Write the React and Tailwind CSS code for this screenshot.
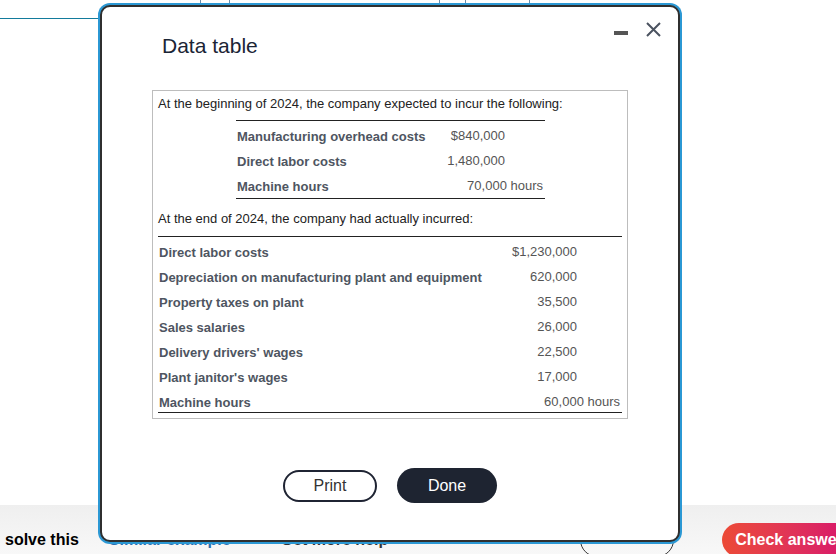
import React from 'react';

// Data table modal over a partially hidden question page

const planned = [
  { label: 'Manufacturing overhead costs', value: '$840,000' },
  { label: 'Direct labor costs', value: '1,480,000' },
  { label: 'Machine hours', value: '70,000 hours', unit: true },
];

const actual = [
  { label: 'Direct labor costs', value: '$1,230,000' },
  { label: 'Depreciation on manufacturing plant and equipment', value: '620,000' },
  { label: 'Property taxes on plant', value: '35,500' },
  { label: 'Sales salaries', value: '26,000' },
  { label: 'Delivery drivers\' wages', value: '22,500' },
  { label: 'Plant janitor\'s wages', value: '17,000' },
  { label: 'Machine hours', value: '60,000 hours', unit: true },
];

const Row = ({ row, numPad }) => (
  <div className="flex h-[25px] pt-[8px] leading-[16px] text-[13px]">
    <div className="flex-1 pl-[1px] font-bold text-[#4e5561] whitespace-nowrap">{row.label}</div>
    <div className={`text-right text-[#555] whitespace-nowrap -mt-[1px] ${row.unit ? 'pr-[2px]' : numPad}`}>
      {row.value}
    </div>
  </div>
);

const App = () => {
  return (
    <div
      className="relative w-full h-[554px] overflow-hidden bg-white flex flex-col"
      style={{ fontFamily: '"Liberation Sans", Arial, sans-serif' }}
    >
      {/* background page fragments */}
      <div className="flex h-[4px]">
        <div className="w-[200px]" />
        <div className="w-[29px] border-l border-[#6b8aa8]" />
        <div className="w-[210px] border-l border-[#6b8aa8]" />
        <div className="w-[26px] border-l border-[#6b8aa8]" />
        <div className="w-[64px] border-l border-[#6b8aa8]" />
        <div className="w-[10px] border-l border-[#6b8aa8]" />
      </div>
      <div className="mt-[14px] w-[110px] h-[1px] bg-[#137b9c]" />

      {/* bottom bar */}
      <div className="mt-auto h-[49px] bg-gradient-to-b from-[#efefef] to-[#f8f8f8] flex items-center pt-[20px] whitespace-nowrap">
        <span className="pl-[5px] text-[16px] font-bold text-black leading-[20px]">solve this</span>
        <span className="ml-[30px] text-[16px] font-bold text-[#2a6fb0] leading-[20px]">Similar example</span>
        <span className="ml-[50px] text-[16px] font-bold text-[#333] leading-[20px]">Get more help</span>
        <button className="ml-[192px] w-[94px] h-[34px] rounded-full border-[1.5px] border-[#333] text-[15px] text-[#2a6fb0] shrink-0">
          Clear all
        </button>
        <button className="ml-[48px] w-[140px] h-[34px] rounded-full bg-gradient-to-r from-[#ec4a35] to-[#d5006f] text-white text-[16px] font-bold text-left pl-[13px] shrink-0">
          Check answer
        </button>
      </div>

      {/* modal */}
      <div className="absolute left-[100px] top-[5px] w-[580px] h-[537px] bg-white border-2 border-[#2f2f2f] rounded-[10px] shadow-[0_0_0_2px_#2b98d4]">
        <div className="relative pl-[60px] pt-[25px]">
          <h2 className="text-[21px] leading-[28px] text-[#1b2435]">Data table</h2>
          <div className="absolute right-[50px] top-[24px] w-[14px] h-[4px] bg-[#555]" />
          <svg className="absolute right-[17px] top-[15px]" width="15" height="15" viewBox="0 0 15 15">
            <path d="M1 1L14 14M14 1L1 14" stroke="#4b5360" strokeWidth="2" fill="none" />
          </svg>
        </div>

        <div className="ml-[50px] mt-[30px] w-[476px] border border-[#bdbdbd] px-[5px] pt-[5px] pb-[5px] text-[13px] text-[#222]">
          <p className="leading-[16px]">At the beginning of 2024, the company expected to incur the following:</p>
          <div className="ml-[78px] mr-[77px] mt-[8px] border-t border-[#222] border-b pb-[2px]">
            {planned.map((r) => (
              <Row key={r.label} row={r} numPad="pr-[40px]" />
            ))}
          </div>
          <p className="leading-[16px] mt-[12px]">At the end of 2024, the company had actually incurred:</p>
          <div className="mt-[9px] border-t border-b border-[#222]">
            {actual.map((r) => (
              <Row key={r.label} row={r} numPad="pr-[45px]" />
            ))}
          </div>
        </div>

        <div className="flex justify-center items-center gap-[20px] mt-[49px]">
          <button className="w-[94px] h-[32px] rounded-full border-2 border-[#1f2433] text-[16px] text-[#333]">
            Print
          </button>
          <button className="w-[100px] h-[35px] rounded-full bg-[#1e2431] text-[16px] text-white">
            Done
          </button>
        </div>
      </div>
    </div>
  );
};

export default App;
